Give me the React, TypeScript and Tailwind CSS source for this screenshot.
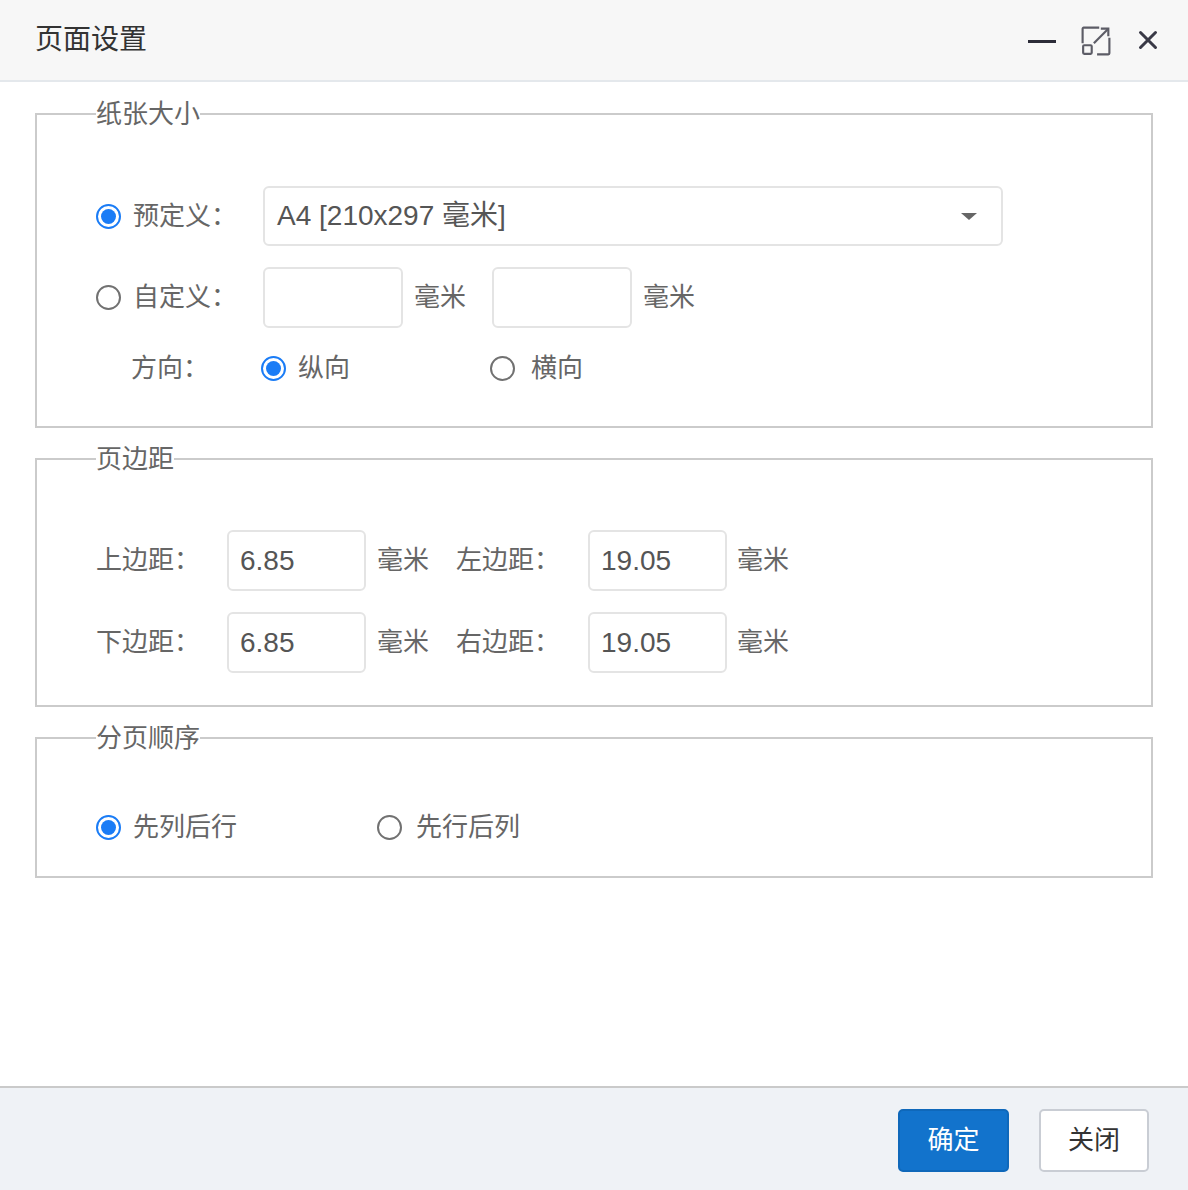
import React from 'react';

const Radio = ({ checked }: { checked?: boolean }) => (
  <span
    className={`flex h-[25px] w-[25px] shrink-0 items-center justify-center rounded-full border-2 bg-white ${
      checked ? 'border-[#1a7cf6]' : 'border-[#717171]'
    }`}
  >
    {checked && <span className="h-[15px] w-[15px] rounded-full bg-[#1a7cf6]" />}
  </span>
);

const Field = ({ value, w }: { value?: string; w: string }) => (
  <div className={`flex h-[61px] ${w} items-center rounded-md border-2 border-[#e4e4e4] bg-white px-[11px] text-[28px] text-[#555]`}>
    {value}
  </div>
);

const Group = ({ title, children, className }: { title: string; children: React.ReactNode; className: string }) => (
  <fieldset className={`mx-[35px] border-2 border-[#cbcbcb] px-[59px] ${className}`}>
    <legend className="text-[26px] leading-[36px] text-[#666]">{title}</legend>
    {children}
  </fieldset>
);

export default function App() {
  return (
    <div
      className="flex h-[1190px] w-[1188px] flex-col bg-white text-[#666]"
      style={{ fontFamily: '"Liberation Sans", "Noto Sans CJK SC", sans-serif' }}
    >
      {/* header */}
      <div className="flex h-[82px] shrink-0 items-center border-b-2 border-[#e4e8ec] bg-[#f7f7f7] pl-[35px] pr-[30px]">
        <h1 className="flex-1 text-[28px] text-[#333]">页面设置</h1>
        <div className="flex items-center">
          <span className="mr-[25px] mt-[3px] h-[3px] w-[28px] bg-[#2c2c38]" />
          <svg width="30" height="30" viewBox="0 0 28 28" fill="none" stroke="#5c5c66" strokeWidth="2" className="mr-[27px] mt-[1px]">
            <path d="M17 1.5 H2.5 a1 1 0 0 0 -1 1 V16" />
            <path d="M15 26.5 H25.5 a1 1 0 0 0 1 -1 V11" />
            <rect x="2" y="18" width="8" height="8" rx="1" />
            <path d="M12 16 L25 3" />
            <path d="M18.5 2.5 H25.5 V9.5" />
          </svg>
          <svg width="20" height="20" viewBox="0 0 20 20" fill="none" stroke="#393946" strokeWidth="3" strokeLinecap="round">
            <path d="M2.5 2.5 L17.5 17.5 M17.5 2.5 L2.5 17.5" />
          </svg>
        </div>
      </div>

      {/* paper size */}
      <Group title="纸张大小" className="mt-[14px] pb-[38px] pt-[54px]">
        <div className="flex h-[60px] items-center">
          <div className="flex w-[167px] items-center gap-3">
            <Radio checked />
            <span className="text-[26px]">预定义：</span>
          </div>
          <div className="flex h-[60px] w-[740px] items-center justify-between rounded-md border-2 border-[#e4e4e4] pl-[12px] pr-[24px] text-[28px] text-[#555]">
            <span>A4 [210x297 毫米]</span>
            <span className="h-0 w-0 border-x-[8px] border-t-[7px] border-x-transparent border-t-[#666]" />
          </div>
        </div>
        <div className="mt-[21px] flex h-[61px] items-center">
          <div className="flex w-[167px] items-center gap-3">
            <Radio />
            <span className="text-[26px]">自定义：</span>
          </div>
          <Field w="w-[140px]" />
          <span className="ml-[11px] w-[78px] text-[26px]">毫米</span>
          <Field w="w-[140px]" />
          <span className="ml-[11px] text-[26px]">毫米</span>
        </div>
        <div className="mt-[20px] flex h-[40px] items-center">
          <span className="w-[165px] pl-[35px] text-[26px]">方向：</span>
          <div className="flex w-[229px] items-center gap-3">
            <Radio checked />
            <span className="text-[26px]">纵向</span>
          </div>
          <div className="flex items-center gap-4">
            <Radio />
            <span className="text-[26px]">横向</span>
          </div>
        </div>
      </Group>

      {/* margins */}
      <Group title="页边距" className="mt-[13px] pb-[32px] pt-[53px]">
        {[
          ['上边距：', '6.85', '左边距：', '19.05'],
          ['下边距：', '6.85', '右边距：', '19.05'],
        ].map(([a, av, b, bv], i) => (
          <div key={a} className={`flex h-[61px] items-center ${i ? 'mt-[21px]' : ''}`}>
            <span className="w-[131px] text-[26px]">{a}</span>
            <Field w="w-[139px]" value={av} />
            <span className="ml-[11px] w-[79px] text-[26px]">毫米</span>
            <span className="w-[132px] text-[26px]">{b}</span>
            <Field w="w-[139px]" value={bv} />
            <span className="ml-[10px] text-[26px]">毫米</span>
          </div>
        ))}
      </Group>

      {/* page order */}
      <Group title="分页顺序" className="mt-[13px] pb-[29px] pt-[51px]">
        <div className="flex h-[40px] items-center">
          <div className="flex w-[281px] items-center gap-3">
            <Radio checked />
            <span className="text-[26px]">先列后行</span>
          </div>
          <div className="flex items-center gap-[14px]">
            <Radio />
            <span className="text-[26px]">先行后列</span>
          </div>
        </div>
      </Group>

      <div className="flex-1" />

      {/* footer */}
      <div className="flex h-[104px] shrink-0 items-center justify-end gap-[30px] border-t-2 border-[#cacaca] bg-[#eff2f6] pr-[39px] pt-[2px]">
        <button className="h-[63px] w-[111px] rounded-[5px] border-2 border-[#0f68ba] bg-[#1273cc] text-[26px] text-white">
          确定
        </button>
        <button className="h-[63px] w-[110px] rounded-[5px] border-2 border-[#c9cdd4] bg-white text-[26px] text-[#333]">
          关闭
        </button>
      </div>
    </div>
  );
}
